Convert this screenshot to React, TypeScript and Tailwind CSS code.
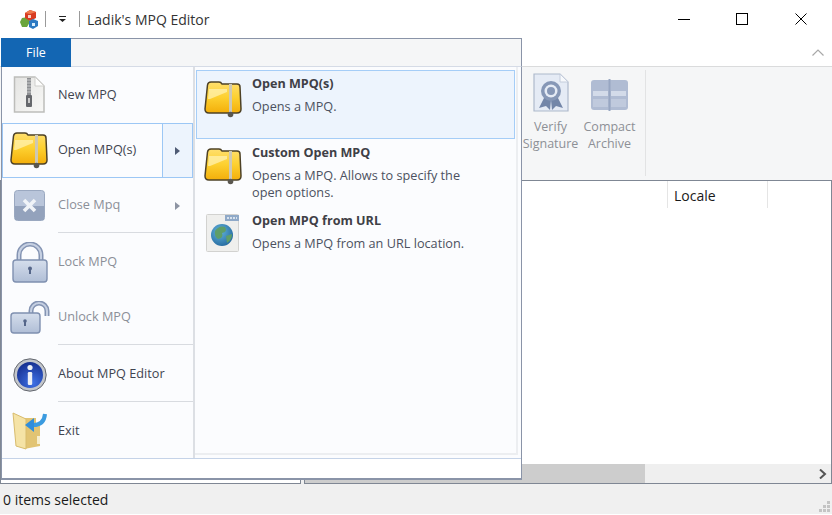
import type { ReactNode } from 'react';

const FONT = "font-['Open_Sans','Noto_Sans',sans-serif]";

function ZipFolder() {
  return (
    <svg width="38" height="37" viewBox="0 0 38 37">
      <defs>
        <linearGradient id="fold" x1="0" y1="0" x2="0" y2="1">
          <stop offset="0" stopColor="#ffdf6e" />
          <stop offset="0.5" stopColor="#fdd02f" />
          <stop offset="1" stopColor="#f3ae0a" />
        </linearGradient>
      </defs>
      <path d="M3.5 4 Q4 1 7 1 H15 Q17 1 18 3 H33 Q36 3 36 6 L37 28 Q37 32 33 32 H5 Q1 32 1 28 Z" fill="url(#fold)" stroke="#4d4126" strokeWidth="1.5" />
      <path d="M5 8 H23 V11 L6 18 H4 Z" fill="#fff3b8" opacity="0.7" />
      <rect x="25" y="3" width="3" height="29" fill="#cdc8b4" />
      <circle cx="26.5" cy="33.5" r="2.8" fill="#5a574f" />
    </svg>
  );
}

function ZipPage() {
  return (
    <svg width="33" height="38" viewBox="0 0 33 38">
      <defs>
        <linearGradient id="page" x1="0" y1="0" x2="1" y2="1">
          <stop offset="0" stopColor="#e4e4e2" />
          <stop offset="1" stopColor="#f8f8f6" />
        </linearGradient>
      </defs>
      <path d="M1.5 1 H22 L31 10 V36 H1.5 Z" fill="url(#page)" stroke="#bdbdba" strokeWidth="1.5" />
      <path d="M22 1 V10 H31 Z" fill="#fdfdfc" stroke="#cfcfcc" />
      <path d="M14 2 H18 V19 H14 Z" fill="#8e9093" />
      <path d="M14 4 H18 M14 7 H18 M14 10 H18 M14 13 H18 M14 16 H18" stroke="#c9cacb" />
      <rect x="13" y="19" width="6" height="12" rx="1" fill="#66686c" />
      <rect x="15" y="22" width="2" height="5" fill="#c9c9c9" />
    </svg>
  );
}

function CloseIcon() {
  return (
    <svg width="31" height="31" viewBox="0 0 31 31">
      <rect x="0.5" y="0.5" width="30" height="30" rx="3" fill="#b9c5da" stroke="#9aa8c0" />
      <rect x="1" y="16" width="29" height="14" fill="#93a2bc" />
      <path d="M10 10 L21 21 M21 10 L10 21" stroke="#f1f4f8" strokeWidth="3.6" />
    </svg>
  );
}

function LockIcon() {
  return (
    <svg width="36" height="41" viewBox="0 0 36 41">
      <defs>
        <linearGradient id="lockb" x1="0" y1="0" x2="0" y2="1">
          <stop offset="0" stopColor="#d5deec" />
          <stop offset="1" stopColor="#b0bed6" />
        </linearGradient>
      </defs>
      <path d="M7 19 V13 A11 11 0 0 1 29 13 V19" fill="none" stroke="#8494b3" strokeWidth="5" />
      <path d="M7 19 V13 A11 11 0 0 1 29 13 V19" fill="none" stroke="#c6d0e2" strokeWidth="2" />
      <rect x="1" y="18" width="34" height="22" rx="3" fill="url(#lockb)" stroke="#7f90b0" strokeWidth="1.4" />
      <circle cx="18" cy="26.5" r="2" fill="#556689" />
      <rect x="17" y="27" width="2" height="5" fill="#556689" />
    </svg>
  );
}

function UnlockIcon() {
  return (
    <svg width="40" height="33" viewBox="0 0 40 33">
      <defs>
        <linearGradient id="unlockb" x1="0" y1="0" x2="0" y2="1">
          <stop offset="0" stopColor="#d5deec" />
          <stop offset="1" stopColor="#b0bed6" />
        </linearGradient>
      </defs>
      <path d="M21 13 V10 A8 8 0 0 1 37 10 V15" fill="none" stroke="#8494b3" strokeWidth="5" />
      <path d="M21 13 V10 A8 8 0 0 1 37 10 V15" fill="none" stroke="#c6d0e2" strokeWidth="2" />
      <rect x="1" y="12" width="29" height="20" rx="3" fill="url(#unlockb)" stroke="#7f90b0" strokeWidth="1.4" />
      <circle cx="15" cy="20" r="1.8" fill="#556689" />
      <rect x="14" y="20" width="2" height="5" fill="#556689" />
    </svg>
  );
}

function InfoIcon() {
  return (
    <svg width="34" height="34" viewBox="0 0 34 34">
      <defs>
        <radialGradient id="inf" cx="0.6" cy="0.8" r="0.85">
          <stop offset="0" stopColor="#3f72e6" />
          <stop offset="1" stopColor="#142c8c" />
        </radialGradient>
      </defs>
      <circle cx="17" cy="17" r="16.2" fill="#c3c6cb" stroke="#63676e" />
      <circle cx="17" cy="17" r="13" fill="url(#inf)" />
      <circle cx="17" cy="9.5" r="2.6" fill="#eef1f6" />
      <rect x="14.8" y="14" width="4.4" height="13" rx="1.2" fill="#eef1f6" />
    </svg>
  );
}

function ExitIcon() {
  return (
    <svg width="35" height="38" viewBox="0 0 35 38">
      <path d="M12 6 H24 V13 H28 V34 L12 37 Z" fill="#e2c473" />
      <path d="M1 1 L14 7 V37 L4 34 Z" fill="#f5e3a6" stroke="#d8bc6e" />
      <rect x="25" y="24" width="3" height="8" fill="#f7eecd" />
      <path d="M33 2 Q32 14 19 13" fill="none" stroke="#3b9be0" strokeWidth="4" />
      <path d="M13 13 L22 6 V20 Z" fill="#2f8ddb" />
    </svg>
  );
}

function UrlIcon() {
  return (
    <svg width="34" height="38" viewBox="0 0 34 38">
      <defs>
        <radialGradient id="globe" cx="0.4" cy="0.35" r="0.8">
          <stop offset="0" stopColor="#63b4dd" />
          <stop offset="1" stopColor="#1c5f96" />
        </radialGradient>
      </defs>
      <rect x="0.5" y="0.5" width="32" height="37" rx="1" fill="#efefed" stroke="#d2d2d0" />
      <rect x="19" y="1" width="14" height="6" fill="#8fa9c8" />
      <path d="M21 4 H31" stroke="#eef3f9" strokeDasharray="2 1" strokeWidth="1.5" />
      <circle cx="16" cy="21" r="11" fill="url(#globe)" />
      <path d="M9 17 Q13 11 19 13 Q22 18 16 19 Q18 24 12 25 Q8 22 9 17 Z" fill="#5f9e68" />
      <path d="M20 22 L26 20 Q26 26 21 29 Z" fill="#5f9e68" />
    </svg>
  );
}

function VerifyIcon() {
  return (
    <svg width="36" height="40" viewBox="0 0 36 40">
      <path d="M1 1 H27 L35 9 V38 H1 Z" fill="#e5ebf5" stroke="#aeb9cc" strokeWidth="1.2" />
      <path d="M27 1 V9 H35 Z" fill="#f7f9fc" stroke="#c4cddc" />
      <path d="M12 23 L6 35 L13 33 L17 37 L18 27 L19 37 L23 33 L30 35 L24 23 Z" fill="#7386a8" />
      <circle cx="18" cy="18" r="10" fill="#8697b6" />
      <circle cx="18" cy="18" r="6.5" fill="#e5ebf5" />
      <circle cx="18" cy="18" r="4" fill="#8697b6" />
    </svg>
  );
}

function CompactIcon() {
  return (
    <svg width="38" height="32" viewBox="0 0 38 32">
      <rect x="0" y="1" width="37" height="30" rx="3" fill="#b0bcd3" />
      <rect x="2" y="12" width="15" height="5" fill="#d3dbe9" />
      <rect x="20" y="12" width="15" height="5" fill="#d3dbe9" />
      <rect x="2" y="20" width="15" height="8" fill="#c0cadd" />
      <rect x="20" y="20" width="15" height="8" fill="#c0cadd" />
      <rect x="17.5" y="0" width="2" height="32" fill="#97a6c2" />
    </svg>
  );
}

function AppIcon() {
  return (
    <svg width="20" height="20" viewBox="0 0 20 20">
      <path d="M3 9 L9 8 L11 13 L8 18 L3 18 L1 13 Z" fill="#6aa53c" />
      <path d="M6 4 L11 1 L17 3 L17 9 L11 12 L6 9 Z" fill="#d83c22" />
      <path d="M6 4 L11 1 L17 3 L11 5 Z" fill="#ef7a4e" />
      <path d="M10 12 L14 10 L19 12 L19 17 L14 20 L10 18 Z" fill="#2b79c2" />
      <rect x="9" y="6" width="3" height="3" fill="#f8d0c6" />
      <rect x="13" y="14" width="3" height="3" fill="#d8ecfa" />
    </svg>
  );
}

function Arrow({ muted }: { muted?: boolean }) {
  return (
    <svg width="5" height="8" viewBox="0 0 5 8">
      <path d="M0 0 L5 4 L0 8 Z" fill={muted ? '#8d94a3' : '#4f5b75'} />
    </svg>
  );
}

interface MenuRowProps {
  icon: ReactNode;
  label: string;
  height: string;
  labelClass?: string;
  disabled?: boolean;
  arrow?: boolean;
  divider?: boolean;
}

function MenuRow({ icon, label, height, labelClass, disabled, arrow, divider }: MenuRowProps) {
  return (
    <div className={`relative flex items-center ${height}`}>
      <div className="mr-px flex w-[55px] shrink-0 justify-center">{icon}</div>
      <span className={`text-[12.7px] ${labelClass ?? ''} ${disabled ? 'text-[#8b8f98]' : 'text-[#3f4450]'}`}>{label}</span>
      {arrow && (
        <span className="absolute right-[13px] top-1/2 -mt-1 flex">
          <Arrow muted={disabled} />
        </span>
      )}
      {divider && <div className="absolute bottom-0 left-[56px] right-0 h-px bg-[#d8dbe0]" />}
    </div>
  );
}

interface SubItemProps {
  icon: ReactNode;
  title: string;
  text: ReactNode;
  className: string;
  iconTop: string;
}

function SubItem({ icon, title, text, className, iconTop }: SubItemProps) {
  return (
    <div className={`flex ${className}`}>
      <div className={`mr-[3px] flex w-[52px] shrink-0 justify-center ${iconTop}`}>{icon}</div>
      <div className="pt-[4px]">
        <div className="text-[12.6px] leading-[17px] font-bold text-[#3f4046]">{title}</div>
        <div className="mt-[6px] text-[12.7px] leading-[17px] text-[#4c5160]">{text}</div>
      </div>
    </div>
  );
}

function FileMenu() {
  return (
    <div className="absolute left-px top-[38px] z-10 flex h-[442px] w-[521px] flex-col">
      <div className="flex h-[29px] shrink-0">
        <div className="flex w-[70px] items-center justify-center bg-[#1366b3] pt-px text-[12.5px] text-white">File</div>
        <div className="flex-1 border-t border-r border-b border-t-[#8a94a8] border-r-[#8a94a8] border-b-[#d5dbe6] bg-[#f5f6f7]" />
      </div>
      <div className="flex min-h-0 flex-1 flex-col border-x border-b-2 border-[#8a94a8] bg-white">
        <div className="flex h-[391px] shrink-0 bg-[#fbfcfe]">
          <div className="w-[191px] shrink-0">
            <MenuRow icon={<ZipPage />} label="New MPQ" height="h-[56px]" />
            <div className="relative flex h-[55px] items-center border border-[#9cc7f5]">
              <div className="mr-[4px] flex w-[51px] shrink-0 justify-center"><ZipFolder /></div>
              <span className="mb-[2px] text-[12.7px] text-[#3f4450]">Open MPQ(s)</span>
              <div className="absolute bottom-0 right-0 top-0 flex w-[30px] items-center justify-center border-l border-[#9cc7f5] bg-[#edf4fd]">
                <Arrow />
              </div>
            </div>
            <MenuRow icon={<CloseIcon />} label="Close Mpq" height="h-[55px]" labelClass="mb-[2px]" disabled arrow divider />
            <MenuRow icon={<LockIcon />} label="Lock MPQ" height="h-[56px] pt-[2px]" disabled />
            <MenuRow icon={<UnlockIcon />} label="Unlock MPQ" height="h-[56px]" disabled divider />
            <MenuRow icon={<InfoIcon />} label="About MPQ Editor" height="h-[57px] pt-[2px]" labelClass="mb-[2px]" divider />
            <MenuRow icon={<ExitIcon />} label="Exit" height="h-[56px] pt-[2px]" />
          </div>
          <div className="w-[2px] shrink-0 bg-[#dcdfe4]" />
          <div className="flex h-[388px] w-[323px] shrink-0 flex-col gap-px border-b-[2px] border-r-[2px] border-[#eceef1] pl-px pr-px pt-[3px]">
            <SubItem
              icon={<ZipFolder />}
              title="Open MPQ(s)"
              text="Opens a MPQ."
              className="h-[69px] border border-[#a5cdf7] bg-[#edf4fd]"
              iconTop="pt-[10px]"
            />
            <SubItem
              icon={<ZipFolder />}
              title="Custom Open MPQ"
              text={<>Opens a MPQ. Allows to specify the<br />open options.</>}
              className="h-[67px] pl-px"
              iconTop="pt-[8px]"
            />
            <SubItem
              icon={<UrlIcon />}
              title="Open MPQ from URL"
              text="Opens a MPQ from an URL location."
              className="h-[50px] pl-px"
              iconTop="pt-[6px]"
            />
          </div>
        </div>
        <div className="h-px shrink-0 bg-[#c5d3e8]" />
      </div>
    </div>
  );
}

export default function App() {
  return (
    <div className={`relative flex h-[515px] w-[832px] flex-col overflow-hidden bg-white ${FONT}`}>
      <div className="flex h-[38px] shrink-0 items-center">
        <div className="ml-[19px] flex w-[20px] justify-center"><AppIcon /></div>
        <div className="ml-[6px] h-[16px] w-px bg-[#9a9a9a]" />
        <svg className="ml-[13px]" width="7" height="6" viewBox="0 0 7 6">
          <path d="M0 0 H7 V1 H0 Z M0 3 H7 L3.5 6 Z" fill="#222" />
        </svg>
        <div className="ml-[13px] h-[16px] w-px bg-[#9a9a9a]" />
        <span className="ml-[7px] text-[14px] text-[#333]">Ladik's MPQ Editor</span>
        <div className="ml-auto flex items-center">
          <svg width="12" height="12" viewBox="0 0 12 12"><path d="M0 6.5 H12" stroke="#000" /></svg>
          <svg className="ml-[46px]" width="12" height="12" viewBox="0 0 12 12"><rect x="0.5" y="0.5" width="11" height="11" fill="none" stroke="#000" /></svg>
          <svg className="ml-[47px] mr-[25px]" width="12" height="12" viewBox="0 0 12 12"><path d="M0.5 0.5 L11.5 11.5 M11.5 0.5 L0.5 11.5" stroke="#000" /></svg>
        </div>
      </div>
      <div className="flex h-[28px] shrink-0 items-center justify-end pr-[8px]">
        <svg width="12" height="7" viewBox="0 0 12 7"><path d="M0.5 6.5 L6 1 L11.5 6.5" fill="none" stroke="#a8a8a8" strokeWidth="1.2" /></svg>
      </div>
      <div className="flex h-[114px] shrink-0 border-t border-[#dadbdc] bg-[#f5f6f7] pl-[523px] pt-[3px]">
        <div className="flex h-[106px] border-r border-[#e2e3e4] pr-[9px] text-[12.5px] leading-[17px] text-[#8d9096]">
          <div className="flex w-[55px] flex-col items-center">
            <div className="mt-[3px]"><VerifyIcon /></div>
            <div className="mt-[5px] text-center">Verify Signature</div>
          </div>
          <div className="ml-[5px] flex w-[53px] flex-col items-center">
            <div className="mt-[9px]"><CompactIcon /></div>
            <div className="mt-[7px] text-center">Compact Archive</div>
          </div>
        </div>
      </div>
      <div className="flex min-h-0 flex-1 gap-[3px] bg-[#f0f0f0]">
        <div className="w-[301px] shrink-0 border border-[#7f8794] bg-white" />
        <div className="flex min-w-0 flex-1 flex-col border border-[#7f8794] bg-white">
          <div className="flex h-[28px] shrink-0 pl-[362px]">
            <div className="flex h-[27px] w-[101px] items-center border-x border-[#e5e5e5] pl-[6px] pt-px text-[14px] text-[#1a1a1a]">Locale</div>
          </div>
          <div className="flex-1" />
          <div className="flex h-[19px] shrink-0 bg-[#efefef]">
            <div className="w-[340px] bg-[#cdcdcd]" />
            <div className="ml-auto flex w-[17px] items-center justify-center">
              <svg width="8" height="10" viewBox="0 0 8 10"><path d="M1 0.5 L6 5 L1 9.5" fill="none" stroke="#555" strokeWidth="2" /></svg>
            </div>
          </div>
        </div>
      </div>
      <div className="flex h-[31px] shrink-0 items-center justify-between border-b border-white bg-[#f0f0f0] pl-[3px] text-[14px] text-[#1a1a1a]">
        <span>0 items selected</span>
        <svg className="mb-[-14px] mr-[2px]" width="11" height="11" viewBox="0 0 11 11" fill="#c4c4c4">
          <rect x="8" y="0" width="3" height="3" />
          <rect x="4" y="4" width="3" height="3" />
          <rect x="8" y="4" width="3" height="3" />
          <rect x="0" y="8" width="3" height="3" />
          <rect x="4" y="8" width="3" height="3" />
          <rect x="8" y="8" width="3" height="3" />
        </svg>
      </div>
      <FileMenu />
    </div>
  );
}
